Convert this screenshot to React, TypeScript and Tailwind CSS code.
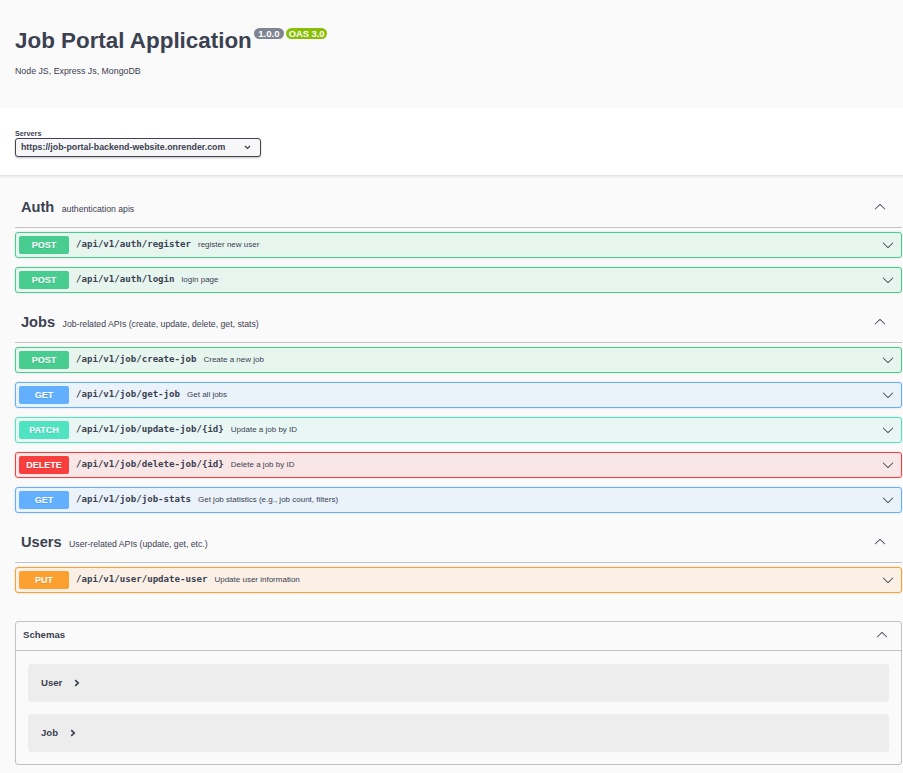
import React from "react";

const ARROW =
  "M17.418 6.109c.272-.268.709-.268.979 0s.271.701 0 .969l-7.908 7.83c-.27.268-.707.268-.979 0l-7.908-7.83c-.27-.268-.27-.701 0-.969.271-.268.709-.268.979 0L10 13.25l7.418-7.141z";

function Arrow({ up = false }: { up?: boolean }) {
  return (
    <svg
      width="12"
      height="12"
      viewBox="0 0 20 20"
      className={up ? "rotate-180 shrink-0" : "shrink-0"}
    >
      <path d={ARROW} fill="#3b4151" />
    </svg>
  );
}

type Op = { m: "POST" | "GET" | "PATCH" | "DELETE" | "PUT"; path: string; sum: string };

const methodStyles: Record<Op["m"], { block: string; badge: string }> = {
  POST: { block: "border-[#49cc90] bg-[rgba(73,204,144,0.1)]", badge: "bg-[#49cc90]" },
  GET: { block: "border-[#61affe] bg-[rgba(97,175,254,0.1)]", badge: "bg-[#61affe]" },
  PATCH: { block: "border-[#50e3c2] bg-[rgba(80,227,194,0.1)]", badge: "bg-[#50e3c2]" },
  DELETE: { block: "border-[#f93e3e] bg-[rgba(249,62,62,0.1)]", badge: "bg-[#f93e3e]" },
  PUT: { block: "border-[#fca130] bg-[rgba(252,161,48,0.1)]", badge: "bg-[#fca130]" },
};

const tags: { name: string; desc: string; pt: string; ops: Op[] }[] = [
  {
    name: "Auth",
    desc: "authentication apis",
    pt: "pt-[18px]",
    ops: [
      { m: "POST", path: "/api/v1/auth/register", sum: "register new user" },
      { m: "POST", path: "/api/v1/auth/login", sum: "login page" },
    ],
  },
  {
    name: "Jobs",
    desc: "Job-related APIs (create, update, delete, get, stats)",
    pt: "pt-[16px]",
    ops: [
      { m: "POST", path: "/api/v1/job/create-job", sum: "Create a new job" },
      { m: "GET", path: "/api/v1/job/get-job", sum: "Get all jobs" },
      { m: "PATCH", path: "/api/v1/job/update-job/{id}", sum: "Update a job by ID" },
      { m: "DELETE", path: "/api/v1/job/delete-job/{id}", sum: "Delete a job by ID" },
      { m: "GET", path: "/api/v1/job/job-stats", sum: "Get job statistics (e.g., job count, filters)" },
    ],
  },
  {
    name: "Users",
    desc: "User-related APIs (update, get, etc.)",
    pt: "pt-[16px]",
    ops: [{ m: "PUT", path: "/api/v1/user/update-user", sum: "Update user information" }],
  },
];

function OpBlock({ op }: { op: Op }) {
  const s = methodStyles[op.m];
  return (
    <div
      className={`h-[26px] flex items-center border rounded-[3px] pl-[3px] pr-[7px] shadow-[0_0_2px_rgba(0,0,0,0.15)] ${s.block}`}
    >
      <div
        className={`w-[50px] h-[18px] rounded-[2px] text-white font-bold text-[9px] leading-none flex items-center justify-center [text-shadow:0_1px_0_rgba(0,0,0,0.1)] ${s.badge}`}
      >
        {op.m}
      </div>
      <span className="ml-[7px] font-['DejaVu_Sans_Mono',monospace] font-bold text-[9.1px] leading-none text-[#3b4151]">
        {op.path}
      </span>
      <span className="ml-[7px] text-[8px] leading-none text-[#3b4151]">{op.sum}</span>
      <div className="flex-1" />
      <Arrow />
    </div>
  );
}

function SmallChevron() {
  return (
    <svg width="6" height="8" viewBox="0 0 6 8" className="shrink-0">
      <path d="M1.2 1.2 L4.2 4 L1.2 6.8" fill="none" stroke="#3b4151" strokeWidth="1.7" />
    </svg>
  );
}

export default function App() {
  return (
    <div className="min-h-screen bg-[#fafafa] font-['Liberation_Sans',Arial,sans-serif] text-[#3b4151] leading-none">
      {/* Info header */}
      <div className="h-[108px] pl-[15px] pt-[30px]">
        <div className="flex items-start">
          <h1 className="text-[22.4px] leading-[22px] font-bold text-[#3b4151]">Job Portal Application</h1>
          <span className="ml-[2.5px] -mt-[2px] h-[11px] leading-[11px] rounded-full bg-[#7d8492] px-[4px] text-[9.6px] font-bold text-white">
            1.0.0
          </span>
          <span className="ml-[2.5px] -mt-[2px] h-[11px] leading-[11px] rounded-full bg-[#89bf04] px-[2.5px] text-[9.4px] font-bold text-white">
            OAS 3.0
          </span>
        </div>
        <p className="mt-[15px] text-[8.8px] leading-none">Node JS, Express Js, MongoDB</p>
      </div>

      {/* Servers */}
      <div className="h-[68px] bg-white border-b border-[#e2e2e2] shadow-[0_1px_2px_rgba(0,0,0,0.08)] pl-[15px] pt-[21.5px]">
        <div className="text-[7.2px] leading-none font-bold">Servers</div>
        <div className="mt-[1.6px] h-[19px] w-[246px] border-[1.5px] border-[#41444e] rounded-[3px] bg-[#f7f7f7] shadow-[0_1px_2px_rgba(0,0,0,0.25)] flex items-center justify-between pl-[5px] pr-[9px]">
          <span className="text-[8.8px] font-bold text-[#3b4151]">https://job-portal-backend-website.onrender.com</span>
          <svg width="7" height="5" viewBox="0 0 7 5">
            <path d="M1 1 L3.5 3.5 L6 1" fill="none" stroke="#3b4151" strokeWidth="1.2" />
          </svg>
        </div>
      </div>

      {/* Tags */}
      <div className="pl-[15px] pr-[1px]">
        {tags.map((t) => (
          <div key={t.name} className={t.pt}>
            <div className="h-[34px] flex items-center justify-between border-b border-[rgba(59,65,81,0.3)] pb-[7px] pl-[6px] pr-[16px]">
              <div className="flex items-baseline">
                <span className="text-[14.6px] leading-[16px] font-bold">{t.name}</span>
                <span className="ml-[7.5px] text-[8.7px] leading-none">{t.desc}</span>
              </div>
              <Arrow up />
            </div>
            <div className="flex flex-col gap-[9px] pt-[4px]">
              {t.ops.map((op) => (
                <OpBlock key={op.path + op.m} op={op} />
              ))}
            </div>
          </div>
        ))}

        {/* Schemas */}
        <div className="mt-[28px] border border-[rgba(59,65,81,0.3)] rounded-[3px]">
          <div className="h-[29px] border-b border-[rgba(59,65,81,0.3)] flex items-center justify-between pl-[7px] pr-[13px] pb-[2px]">
            <span className="text-[9.6px] font-bold">Schemas</span>
            <Arrow up />
          </div>
          <div className="flex flex-col gap-[12px] px-[12px] pt-[13px] pb-[12px]">
            {["User", "Job"].map((n) => (
              <div key={n} className="h-[38px] rounded-[4px] bg-[rgba(0,0,0,0.05)] flex items-center pl-[13px]">
                <span className="text-[9.6px] font-bold text-[#3b4151]">{n}</span>
                <span className="ml-[12px] flex items-center">
                  <SmallChevron />
                </span>
              </div>
            ))}
          </div>
        </div>
      </div>
    </div>
  );
}
